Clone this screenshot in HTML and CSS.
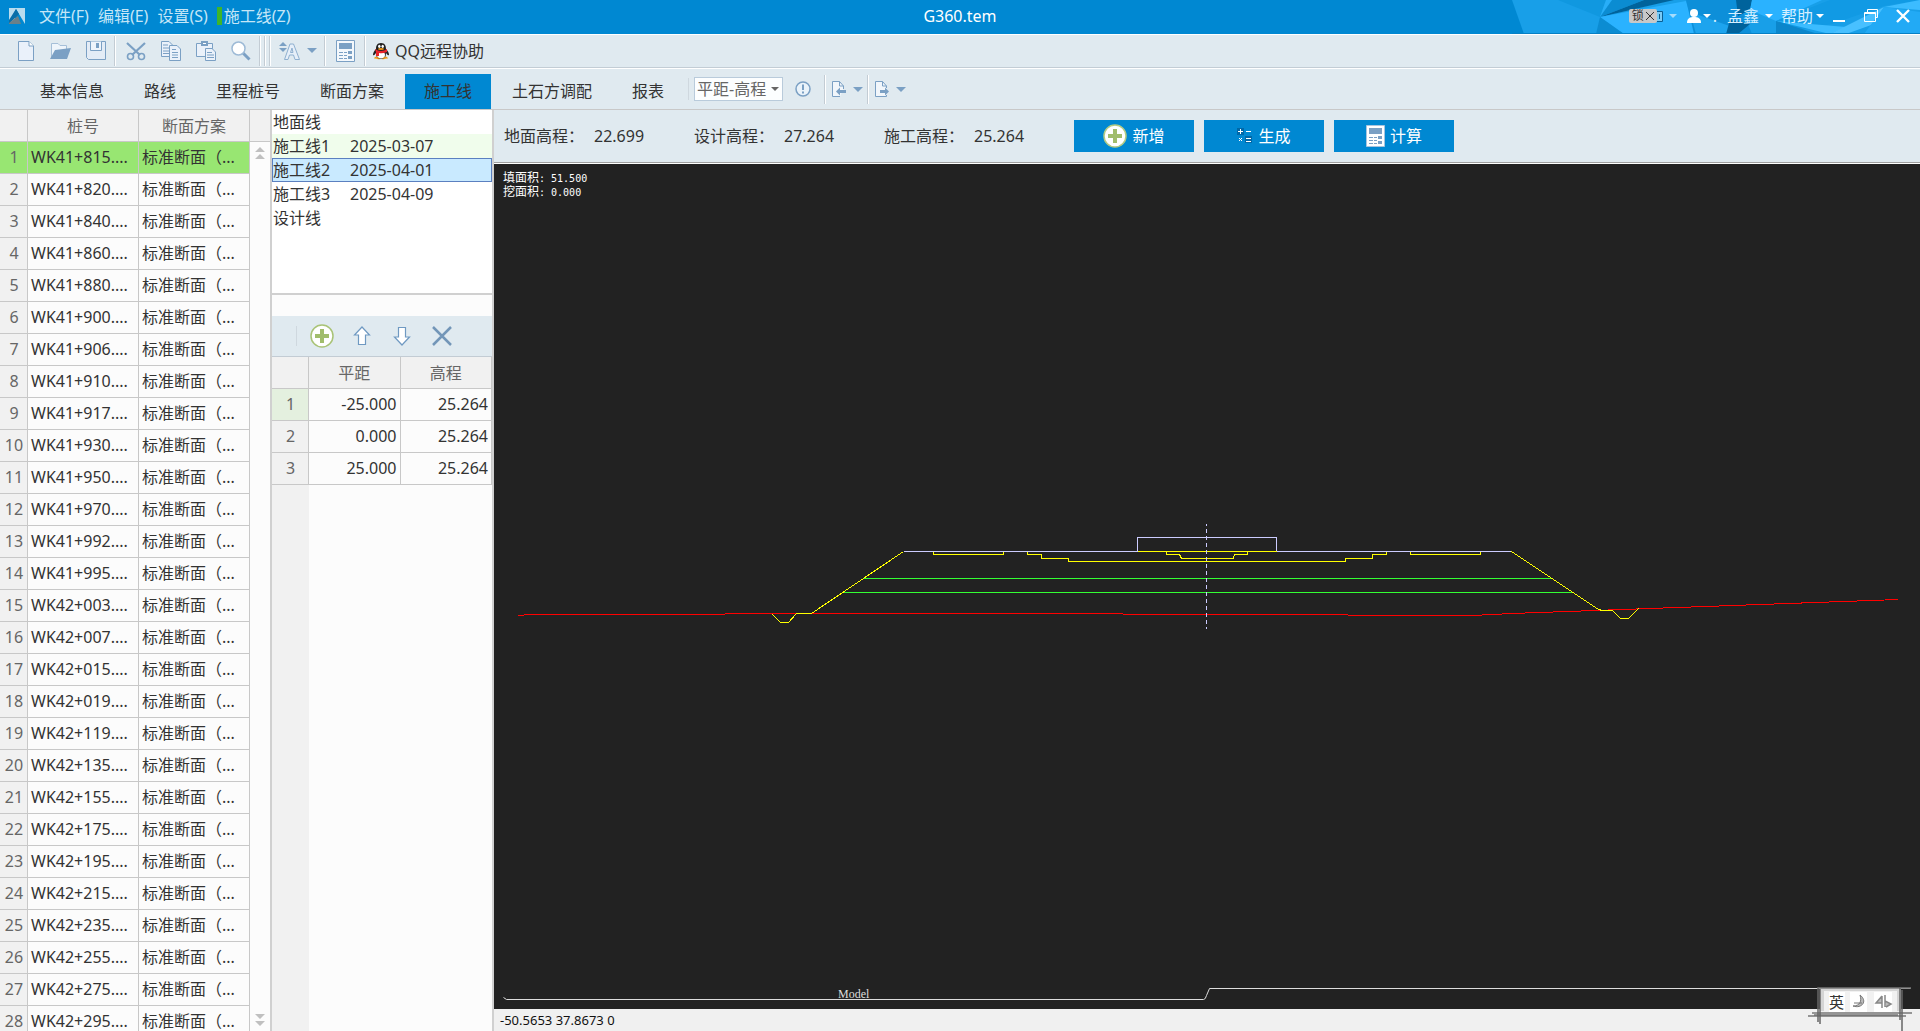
FILE: index.html
```html
<!DOCTYPE html>
<html lang="zh-CN">
<head>
<meta charset="utf-8">
<title>G360.tem</title>
<meta name="viewport" content="width=device-width, initial-scale=1">
<link rel="stylesheet" href="styles.css">
</head>
<body>
<header class="titlebar">
  <svg class="titlebar-art" width="408" height="34" viewBox="0 0 408 34" aria-hidden="true">
    <path d="M0 0H408V34H12Z" fill="#189fe8"/>
    <path d="M88 17L46 0H94Z" fill="#1098e0"/>
    <path d="M94 0H160L88 17Z" fill="#28aef8"/>
    <path d="M88 17L100 0H132Z" fill="#0b8cd2"/>
    <path d="M88 17L132 0H162Z" fill="#00639c"/>
    <path d="M88 17L174 1L184 34H112Z" fill="#2ab2ff"/>
    <path d="M88 17L112 34H84Z" fill="#0b8cd2"/>
    <path d="M174 0H226L240 34H182Z" fill="#0d8fd9"/>
    <path d="M178 12L226 29L214 34H184Z" fill="#1da4ee"/>
    <path d="M224 0H240L238 10L226 16Z" fill="#00639c"/>
    <path d="M214 34L218 20L238 24L226 34Z" fill="#00639c"/>
    <path d="M240 0H310L264 21L238 10Z" fill="#2ab2ff"/>
    <path d="M264 21L318 0H408L372 6L320 24L264 34Z" fill="#119ae4"/>
    <path d="M264 21L334 27L318 34Z" fill="#3cbcff"/>
    <path d="M318 34L372 7L362 24L334 34Z" fill="#48c0ff"/>
    <path d="M264 21L306 34H264Z" fill="#0b86cb"/>
    <path d="M372 7L408 0V10Z" fill="#3cbcff"/>
    <path d="M372 7L408 12V34H352Z" fill="#22aaf5"/>
    <path d="M0 33H408V34H0Z" fill="#0780c4"/>
  </svg>
  <nav class="menus" aria-label="主菜单">
    <svg width="16" height="16" viewBox="0 0 16 16" aria-hidden="true"><path d="M0 0H16V16H0Z" fill="#b9dcee"/><path d="M7 1L16 16H10L4 7Z" fill="#0088cf"/><path d="M7 1L10 6L0 16V12Z" fill="#0a6ea8"/><path d="M0 15L9 8L12 16H0Z" fill="#6b8088"/></svg>
    <button class="menu">文件(F)</button>
    <button class="menu">编辑(E)</button>
    <button class="menu">设置(S)</button>
    <button class="menu menu-marked">施工线(Z)</button>
  </nav>
  <h1 class="doc-title">G360.tem</h1>
  <div class="account">
    <button class="bar-btn lock" aria-label="锁"><span class="lock-face">锁<svg width="8" height="8" viewBox="0 0 8 8"><path d="M0 0L8 8M8 0L0 8" stroke="#333" fill="none"/></svg></span><svg width="6" height="11" viewBox="0 0 6 11"><path d="M0 .5H5.500V10.500H0" stroke="#0a5f94" fill="#7acbf5"/><path d="M2.500 3V8" stroke="#0a5f94"/></svg></button>
    <i class="caret caret-pale"></i>
    <button class="bar-btn user" aria-label="用户"><svg width="14" height="15" viewBox="0 0 14 15"><circle cx="7" cy="4" r="4" fill="#fff"/><path d="M0 14C0 9 3 8 7 8S14 9 14 14Z" fill="#fff"/></svg><i class="caret caret-white"></i>.</button>
    <button class="bar-btn name">孟鑫<i class="caret caret-white"></i></button>
    <button class="bar-btn help">帮助<i class="caret caret-white"></i></button>
    <button class="bar-btn win" aria-label="最小化"><svg width="14" height="14" viewBox="0 0 14 14"><path d="M1 12H13" stroke="#fff" stroke-width="2"/></svg></button>
    <button class="bar-btn win" aria-label="还原"><svg width="14" height="14" viewBox="0 0 14 14"><path d="M3 4V1H13V9H11M0 4H11V13H0ZM0 5H11" stroke="#fff" fill="none" transform="translate(.5 -.5)"/></svg></button>
    <button class="bar-btn win" aria-label="关闭"><svg width="14" height="14" viewBox="0 0 14 14"><path d="M1 1L13 13M13 1L1 13" stroke="#fff" stroke-width="2.4"/></svg></button>
  </div>
</header>

<div class="toolbar" role="toolbar" aria-label="常用工具">
  <button class="tool" aria-label="新建"><svg width="18" height="20" viewBox="0 0 18 20"><path d="M1.500 .5H12L16.500 5V19.500H1.500Z" fill="#eaf1fa" stroke="#7ba0c4"/><path d="M12 .5V5H16.500" fill="#fff" stroke="#7ba0c4"/></svg></button>
  <button class="tool" aria-label="打开"><svg width="21" height="18" viewBox="0 0 21 18"><path d="M1.500 16V1.500H8L10 3.500H16.500V8" fill="#eef5fb" stroke="#a5bfd8"/><path d="M5 8L21 6L17 17H0Z" fill="#7ba0c4"/></svg></button>
  <button class="tool" aria-label="保存"><svg width="20" height="20" viewBox="0 0 20 20"><path d="M.5 .5H19.500V18.500H2.500L.5 16.500Z" fill="#e3ecf6" stroke="#7ba0c4"/><path d="M4.500 .5V9.500H15.500V.5" fill="#eef4fb" stroke="#7ba0c4"/><path d="M10 2H13V7H10Z" fill="#7ba0c4"/></svg></button>
  <i class="sep"></i>
  <button class="tool" aria-label="剪切"><svg width="20" height="20" viewBox="0 0 20 20"><path d="M1 2L14 14M19 2L6 14" stroke="#7ba0c4" stroke-width="2.200"/><circle cx="4.500" cy="15.500" r="3" fill="none" stroke="#7ba0c4" stroke-width="1.600"/><circle cx="15.500" cy="15.500" r="3" fill="none" stroke="#7ba0c4" stroke-width="1.600"/></svg></button>
  <button class="tool" aria-label="复制"><svg width="20" height="20" viewBox="0 0 20 20"><path d="M.5 .5H8L11.500 4V15.500H.5Z" fill="#eaf1fa" stroke="#7ba0c4"/><path d="M2 4H7M2 7H8M2 10H8M2 12.500H8" stroke="#7ba0c4"/><path d="M8.500 4.500H16L19.500 8V19.500H8.500Z" fill="#eaf1fa" stroke="#7ba0c4"/><path d="M11 8.500H15M11 11.500H17M11 14H17M11 16.500H17" stroke="#7ba0c4"/></svg></button>
  <button class="tool" aria-label="粘贴"><svg width="20" height="20" viewBox="0 0 20 20"><path d="M.5 2.500H16.500V15.500H.5Z" fill="#eaf1fa" stroke="#7ba0c4"/><path d="M5 0H12V5H5Z" fill="#7ba0c4"/><path d="M7 2H10V3H7Z" fill="#fff"/><path d="M9.500 7.500H16L19.500 11V19.500H9.500Z" fill="#eaf1fa" stroke="#7ba0c4"/><path d="M11 11.500H16M11 14H18M11 16.500H18" stroke="#7ba0c4"/></svg></button>
  <button class="tool" aria-label="查找"><svg width="20" height="20" viewBox="0 0 20 20"><path d="M12 12L18.500 18.500" stroke="#7ba0c4" stroke-width="3"/><circle cx="7.500" cy="7.500" r="6.500" fill="#fff" stroke="#9dbad6" stroke-width="1.500"/></svg></button>
  <i class="sep"></i><i class="sep"></i><i class="sep"></i>
  <button class="tool tool-drop" aria-label="文字大小"><svg width="22" height="20" viewBox="0 0 22 20"><path d="M4 1L8 5H0ZM0 7H8L4 11Z" fill="#7ba0c4"/><path d="M5.500 18.500H9L10.500 14H14.500L16 18.500H20.500L14.500 3H11Z M11.500 11.500L13 7L14 11.500Z" fill="#e6eff9" stroke="#8fb0d0"/></svg><i class="caret caret-tool"></i></button>
  <i class="sep"></i>
  <button class="tool tool-calc" aria-label="计算器"><svg width="19" height="22" viewBox="0 0 19 22"><path d="M.5 .5H18.500V21.500H.5Z" fill="#f4f8fc" stroke="#7ba0c4"/><path d="M3 3H16V9H3Z" fill="#7ba0c4"/><path d="M3 12.500H7M8 12.500H11M3 15.500H7M8 15.500H11M3 18.500H7M8 18.500H11" stroke="#7ba0c4"/><path d="M12 11H16V14H12ZM12 16H16V19H12Z" fill="#7ba0c4"/></svg></button>
  <i class="sep"></i>
  <button class="tool tool-qq"><svg width="18" height="18" viewBox="0 0 18 18" aria-hidden="true"><path d="M4 16Q1 17 3 15Q9 13 15 15Q17 17 14 16Q13 18 9 17Q5 18 4 16" fill="#f09a18"/><path d="M9 1C5 1 4 4 4 7C2 9 1 11 1 13Q2 14 4 11Q4 17 9 17T14 11Q16 14 17 13C17 11 16 9 14 7C14 4 13 1 9 1Z" fill="#222"/><ellipse cx="9" cy="13" rx="4" ry="3.500" fill="#fff"/><path d="M3 7Q9 11 15 7L15 10Q10 12 7 11V14H4V10Z" fill="#e8232a"/><ellipse cx="7.300" cy="4.300" rx="1.200" ry="1.600" fill="#fff"/><ellipse cx="10.700" cy="4.300" rx="1.200" ry="1.600" fill="#fff"/><ellipse cx="9" cy="7" rx="3" ry="1" fill="#f09a18"/><path d="M2 16.500Q5 14 8 16.500ZM10 16.500Q13 14 16 16.500Z" fill="#f09a18"/></svg>QQ远程协助</button>
</div>

<nav class="tabs" aria-label="模块">
  <button class="tab">基本信息</button>
  <button class="tab">路线</button>
  <button class="tab">里程桩号</button>
  <button class="tab">断面方案</button>
  <button class="tab tab-active">施工线</button>
  <button class="tab">土石方调配</button>
  <button class="tab">报表</button>
  <div class="tab-tools">
    <i class="sep sep-faint"></i>
    <label class="mode"><select aria-label="数据格式"><option>平距-高程</option></select><i class="caret caret-dark"></i></label>
    <button class="tool" aria-label="提示"><svg width="16" height="16" viewBox="0 0 16 16"><circle cx="8" cy="8" r="7" fill="#eaf3fa" stroke="#7ba0c4" stroke-width="1.500"/><path d="M8 3.500V9M8 10.500V12.500" stroke="#7ba0c4" stroke-width="2"/></svg></button>
    <i class="sep"></i>
    <button class="tool tool-io" aria-label="导入"><svg width="16" height="16" viewBox="0 0 16 16"><path d="M12.500 8V5L8.500 .5H1.500V15.500H9M8.500 .5V5H12.500" fill="#f1f6fb" stroke="#7ba0c4"/><path d="M5 10.500L9 6.500V9H15V12H9V14.500Z" fill="#7ba0c4"/></svg><i class="caret caret-tool"></i></button>
    <i class="sep"></i>
    <button class="tool tool-io" aria-label="导出"><svg width="16" height="16" viewBox="0 0 16 16"><path d="M12.500 7V5L8.500 .5H1.500V15.500H12.500V14M8.500 .5V5H12.500" fill="#f1f6fb" stroke="#7ba0c4"/><path d="M15 10.500L11 6.500V9H6V12H11V14.500Z" fill="#7ba0c4"/></svg><i class="caret caret-tool"></i></button>
  </div>
</nav>

<main class="workspace">
  <section class="stations" aria-label="桩号列表">
    <table class="grid station-grid">
      <colgroup><col class="col-no"><col><col></colgroup>
      <thead><tr><th></th><th>桩号</th><th>断面方案</th></tr></thead>
      <tbody>
        <tr class="current"><th>1</th><td>WK41+815....</td><td>标准断面（...</td></tr>
        <tr><th>2</th><td>WK41+820....</td><td>标准断面（...</td></tr>
        <tr><th>3</th><td>WK41+840....</td><td>标准断面（...</td></tr>
        <tr><th>4</th><td>WK41+860....</td><td>标准断面（...</td></tr>
        <tr><th>5</th><td>WK41+880....</td><td>标准断面（...</td></tr>
        <tr><th>6</th><td>WK41+900....</td><td>标准断面（...</td></tr>
        <tr><th>7</th><td>WK41+906....</td><td>标准断面（...</td></tr>
        <tr><th>8</th><td>WK41+910....</td><td>标准断面（...</td></tr>
        <tr><th>9</th><td>WK41+917....</td><td>标准断面（...</td></tr>
        <tr><th>10</th><td>WK41+930....</td><td>标准断面（...</td></tr>
        <tr><th>11</th><td>WK41+950....</td><td>标准断面（...</td></tr>
        <tr><th>12</th><td>WK41+970....</td><td>标准断面（...</td></tr>
        <tr><th>13</th><td>WK41+992....</td><td>标准断面（...</td></tr>
        <tr><th>14</th><td>WK41+995....</td><td>标准断面（...</td></tr>
        <tr><th>15</th><td>WK42+003....</td><td>标准断面（...</td></tr>
        <tr><th>16</th><td>WK42+007....</td><td>标准断面（...</td></tr>
        <tr><th>17</th><td>WK42+015....</td><td>标准断面（...</td></tr>
        <tr><th>18</th><td>WK42+019....</td><td>标准断面（...</td></tr>
        <tr><th>19</th><td>WK42+119....</td><td>标准断面（...</td></tr>
        <tr><th>20</th><td>WK42+135....</td><td>标准断面（...</td></tr>
        <tr><th>21</th><td>WK42+155....</td><td>标准断面（...</td></tr>
        <tr><th>22</th><td>WK42+175....</td><td>标准断面（...</td></tr>
        <tr><th>23</th><td>WK42+195....</td><td>标准断面（...</td></tr>
        <tr><th>24</th><td>WK42+215....</td><td>标准断面（...</td></tr>
        <tr><th>25</th><td>WK42+235....</td><td>标准断面（...</td></tr>
        <tr><th>26</th><td>WK42+255....</td><td>标准断面（...</td></tr>
        <tr><th>27</th><td>WK42+275....</td><td>标准断面（...</td></tr>
        <tr><th>28</th><td>WK42+295....</td><td>标准断面（...</td></tr>
      </tbody>
    </table>
    <div class="scroller">
      <div class="scroller-head"></div>
      <button class="scroll-btn" aria-label="上滚"><svg width="10" height="14" viewBox="0 0 10 14"><path d="M5 0L10 5H0ZM5 7L10 12H0Z" fill="#c0c0c0"/></svg></button>
      <button class="scroll-btn scroll-down" aria-label="下滚"><svg width="10" height="14" viewBox="0 0 10 14"><path d="M0 0H10L5 5ZM0 7H10L5 12Z" fill="#c0c0c0"/></svg></button>
    </div>
  </section>

  <section class="lines" aria-label="施工线">
    <ul class="line-list">
      <li><span>地面线</span></li>
      <li class="alt"><span>施工线1</span><span>2025-03-07</span></li>
      <li class="selected"><span>施工线2</span><span>2025-04-01</span></li>
      <li><span>施工线3</span><span>2025-04-09</span></li>
      <li><span>设计线</span></li>
    </ul>
    <div class="line-tools">
      <i class="sep sep-faint"></i>
      <button class="tool" aria-label="添加"><svg width="24" height="24" viewBox="0 0 24 24"><circle cx="12" cy="12" r="11" fill="#fff" stroke="#a9c377" stroke-width="1.500"/><path d="M10 5H14V10H19V14H14V19H10V14H5V10H10Z" fill="#a1bd6c"/></svg></button>
      <button class="tool" aria-label="上移"><svg width="18" height="20" viewBox="0 0 18 20"><path d="M9 1L16.500 9H12.500V18.500H5.500V9H1.500Z" fill="#fff" stroke="#6f99c2" stroke-width="1.200"/></svg></button>
      <button class="tool" aria-label="下移"><svg width="18" height="20" viewBox="0 0 18 20"><path d="M9 19L16.500 11H12.500V1.500H5.500V11H1.500Z" fill="#fff" stroke="#6f99c2" stroke-width="1.200"/></svg></button>
      <button class="tool" aria-label="删除"><svg width="20" height="20" viewBox="0 0 20 20"><path d="M1 1L19 19M19 1L1 19" stroke="#7396b8" stroke-width="2.500"/></svg></button>
    </div>
    <table class="grid point-grid">
      <colgroup><col class="col-no"><col><col></colgroup>
      <thead><tr><th></th><th>平距</th><th>高程</th></tr></thead>
      <tbody>
        <tr class="current"><th>1</th><td>-25.000</td><td>25.264</td></tr>
        <tr><th>2</th><td>0.000</td><td>25.264</td></tr>
        <tr><th>3</th><td>25.000</td><td>25.264</td></tr>
      </tbody>
    </table>
    <div class="gutter"></div>
  </section>

  <section class="section-view" aria-label="横断面">
    <div class="summary">
      <dl class="levels">
        <dt>地面高程：</dt><dd>22.699</dd>
        <dt>设计高程：</dt><dd>27.264</dd>
        <dt>施工高程：</dt><dd>25.264</dd>
      </dl>
      <button class="action"><svg width="24" height="24" viewBox="0 0 24 24" aria-hidden="true"><circle cx="12" cy="12" r="11" fill="#fff" stroke="#b3cb84" stroke-width="1.500"/><path d="M10 5H14V10H19V14H14V19H10V14H5V10H10Z" fill="#a1bd6c"/></svg>新增</button>
      <button class="action"><svg width="16" height="16" viewBox="0 0 16 16" aria-hidden="true"><path d="M0 0H7V7H0ZM8 8H15V15H8Z" fill="#0068a8"/><path d="M1 3.500H6M3.500 1V6M9 3.500H14M9 10.500H14M9 13.500H14M2 10L5 13M5 10L2 13" stroke="#fff" fill="none"/></svg>生成</button>
      <button class="action"><svg width="19" height="22" viewBox="0 0 19 22" aria-hidden="true"><path d="M.5 .5H18.500V21.500H.5Z" fill="#fff" stroke="#a8c4de"/><path d="M3 3H16V9H3Z" fill="#7ba0c4"/><path d="M3 12.500H7M8 12.500H11M3 15.500H7M8 15.500H11M3 18.500H7M8 18.500H11" stroke="#7ba0c4"/><path d="M12 11H16V14H12ZM12 16H16V19H12Z" fill="#7ba0c4"/></svg>计算</button>
    </div>
    <div class="canvas">
      <p class="areas">填面积<b>: 51.500</b><br>挖面积<b>: 0.000</b></p>
      <svg class="plot" viewBox="494 200 1426 780" role="img" aria-label="断面图">
        <g transform="translate(.5 .5)" fill="none" shape-rendering="crispEdges">
          <path d="M517 615H523L524 614H724L725 613H1122L1123 614H1347L1348 615H1472L1511 613L1898 599" stroke="#f00"/>
          <path d="M862 578H1552M841 592H1572" stroke="#3f3"/>
          <path d="M903 551H1137V537H1276V551H1511" stroke="#ccf"/>
          <path d="M772 614L780 622H788L796 613H811L903 551M933 551V554H1003V551M1027 551V554H1041V558H1068V561H1345V558H1372V554H1386V551M1410 551V554H1480V551M1137 551H1276M1166 551V554H1179L1181 558H1233L1234 554H1247V551M1511 551L1598 609L1602 610H1612L1620 618H1628L1638 608" stroke="#ff0"/>
          <path d="M1206 523V628" stroke="#ccf" stroke-dasharray="4 3" stroke-dashoffset="2"/>
        </g>
      </svg>
      <svg class="sheets" viewBox="494 980 1426 29">
        <path d="M503 997L506 999H1203Q1205 999 1206 995L1209 988H1910" transform="translate(.5 .5)" fill="none" stroke="#ddd"/>
        <text x="838" y="998">Model</text>
      </svg>
    </div>
    <footer class="status">-50.5653 37.8673 0</footer>
  </section>
</main>

<div class="ime">
  <svg width="108" height="48" viewBox="1808 983 108 48" role="img" aria-label="输入法">
    <path d="M1820 989H1901V1011H1820Z" fill="#d4d4d4"/>
    <path d="M1824 991H1897V1012H1824Z" fill="#f1f1f1"/>
    <path d="M1829 992H1845V1012H1829ZM1850 992H1867V1012H1850ZM1874 992H1892V1012H1874Z" fill="#fff"/>
    <path d="M1818 988H1911M1812 1013H1912M1808 1016H1906M1814 1015H1898" stroke="#777" stroke-width="1.300"/>
    <path d="M1818 987V1022M1820 989V1024M1900 987V1020M1902 990V1031" stroke="#666" stroke-width="1.500"/>
    <text x="1829" y="1008">英</text>
    <path d="M1860 995C1868 1001 1862 1009 1853 1006C1860 1006 1862 1001 1860 995M1854 1003H1862" fill="#bbb" stroke="#777"/>
    <path d="M1882 996V1008M1882 996L1876 1003H1882M1885 995V1007M1885 1001L1891 1004L1886 1007" fill="#bbb" stroke="#888" stroke-width="1.500"/>
  </svg>
</div>
</body>
</html>
```
FILE: styles.css
```css
:root {
  --blue: #0088d2;
  --panel: #e0eaf0;
  --rule: #c8c8c8;
  --icon: #7ba0c4;
  --text: #333;
}

* { box-sizing: border-box; }

body {
  margin: 0;
  height: 100vh;
  display: flex;
  flex-direction: column;
  overflow: hidden;
  background: #fcfcfc;
  color: var(--text);
  font: 16px/24px "Noto Sans", "Noto Sans CJK SC", sans-serif;
}

button {
  margin: 0;
  padding: 0;
  border: 0;
  background: none;
  color: inherit;
  font: inherit;
  white-space: nowrap;
}

svg { display: block; flex: none; }

/* Title bar */
.titlebar {
  position: relative;
  flex: none;
  display: grid;
  grid-template-columns: 1fr auto 1fr;
  align-items: center;
  height: 35px;
  padding-bottom: 2px;
  border-bottom: 1px solid #fff;
  background: var(--blue);
}
.titlebar-art { position: absolute; top: 0; right: 0; }
.menus { display: flex; align-items: center; padding-left: 9px; }
.menu { margin-left: 9px; color: #c5e6f7; }
.menus svg + .menu { margin-left: 14px; }
.menu-marked { padding-left: 2px; border-left: 5px solid #3fb52a; line-height: 18px; }
.doc-title { margin: 0; font-size: 16px; font-weight: 400; color: #fff; }
.account {
  position: relative;
  display: flex;
  align-items: center;
  justify-content: flex-end;
  padding-right: 10px;
  color: #d5efff;
}
.bar-btn { display: flex; align-items: center; }
.lock-face {
  display: flex;
  align-items: center;
  gap: 2px;
  height: 14px;
  padding: 0 3px;
  border-radius: 2px;
  background: #c8c8c8;
  color: #333;
  font-size: 12px;
}
.lock { margin-right: 6px; }
.user { margin-left: 10px; gap: 2px; }
.name { margin-left: 10px; gap: 6px; }
.help { margin-left: 8px; gap: 3px; }
.win { margin-left: 18px; }
.help + .win { margin-left: 8px; }

.caret {
  width: 0;
  height: 0;
  border: 4px solid transparent;
  border-bottom: 0;
  border-top-color: currentColor;
}
.caret-pale { color: #a5dcfb; }
.caret-white { color: #fff; }
.caret-dark { color: #666; }
.caret-tool { border-width: 5px 5px 0; color: var(--icon); }

/* Toolbars */
.toolbar {
  flex: none;
  display: flex;
  align-items: center;
  height: 34px;
  padding: 0 0 2px 8px;
  border-bottom: 1px solid #fff;
  box-shadow: inset 0 -1px #c3cdd5;
  background: var(--panel);
}
.tool {
  display: flex;
  align-items: center;
  justify-content: center;
  width: 35px;
  height: 32px;
}
.sep {
  align-self: stretch;
  width: 2px;
  margin: 1px 2px 0 1px;
  border-left: 1px solid #c3ccd4;
  border-right: 1px solid #fff;
}
.sep-faint { border-right-color: transparent; opacity: .6; }
.tool-drop { width: 50px; gap: 6px; }
.tool-qq { width: auto; gap: 5px; padding-left: 4px; }

.tabs {
  flex: none;
  display: flex;
  align-items: flex-end;
  height: 41px;
  padding-left: 20px;
  border-bottom: 1px solid var(--rule);
  background: var(--panel);
}
.tab { height: 35px; margin: 0 1px; padding: 0 19px 2px; }
.tab-active { background: var(--blue); }
.tab-tools { display: flex; align-items: center; height: 40px; padding: 5px 0; }
.tab-tools .sep-faint { margin: 4px; }
.mode { position: relative; }
.mode select {
  display: block;
  width: 89px;
  height: 24px;
  padding: 0 2px;
  appearance: none;
  border: 1px solid #b9cbdb;
  border-radius: 0;
  background: #fcfeff;
  color: #666;
  font: inherit;
  line-height: 22px;
}
.mode .caret { position: absolute; right: 4px; top: 10px; }
.mode + .tool { width: 40px; }
.tool-io { width: 38px; gap: 6px; }

/* Work area */
.workspace {
  flex: 1;
  min-height: 0;
  display: grid;
  grid-template-columns: 272px 222px minmax(0, 1fr);
  grid-template-rows: minmax(0, 1fr);
}

.grid {
  border-collapse: separate;
  border-spacing: 0;
  table-layout: fixed;
}
.grid th, .grid td {
  height: 32px;
  padding: 0 3px 2px;
  border-right: 1px solid var(--rule);
  border-bottom: 1px solid var(--rule);
  font-weight: 400;
  overflow: hidden;
  white-space: nowrap;
}
.grid th { background: #f1f1f1; color: #666; padding: 0 0 2px 1px; }
.grid thead th { padding: 0; }
.grid td { background: #fcfcfc; }

.stations {
  display: flex;
  overflow: hidden;
  border-right: 2px solid #d0d0d0;
}
.station-grid { width: 250px; align-self: flex-start; flex: none; }
.station-grid .col-no { width: 28px; }
.station-grid .current > * { background: #98e672; }
.scroller { flex: 1; display: flex; flex-direction: column; align-items: center; }
.scroller-head {
  align-self: stretch;
  height: 32px;
  margin-bottom: 5px;
  border-bottom: 1px solid var(--rule);
  background: #f1f1f1;
}
.scroll-down { margin-top: auto; padding-bottom: 3px; }

.lines {
  display: flex;
  flex-direction: column;
  border-right: 2px solid #d0d0d0;
}
.line-list {
  height: 185px;
  margin: 0 0 21px;
  padding: 0;
  list-style: none;
  background: #fff;
  border-bottom: 2px solid #d0d0d0;
}
.line-list li { display: grid; grid-template-columns: 77px 1fr; height: 24px; padding: 0 1px; }
.line-list .alt { background: #f0fdec; }
.line-list .selected { padding: 0; border: 1px solid #5b80c0; background: #c9eaff; line-height: 22px; }
.line-tools {
  display: flex;
  align-items: center;
  height: 41px;
  padding-left: 23px;
  border-bottom: 1px solid #c3ccd4;
  background: var(--panel);
}
.line-tools .sep { margin: 10px 4px 10px 1px; }
.line-tools .tool { width: 40px; }
.point-grid { width: 220px; }
.point-grid .col-no { width: 37px; }
.point-grid td { text-align: right; }
.point-grid .current th { background: #e4f0df; }
.gutter { flex: 1; width: 37px; background: #f1f1f1; }

/* Cross-section view */
.section-view { display: flex; flex-direction: column; min-width: 0; }
.summary {
  flex: none;
  display: flex;
  align-items: center;
  gap: 10px;
  height: 54px;
  padding: 0 0 2px 10px;
  border-bottom: 1px solid #fff;
  box-shadow: inset 0 -1px #a0a0a0;
  background: var(--panel);
}
.levels { display: grid; grid-template-columns: repeat(3, 90px 100px); margin: 0 -10px 0 0; }
.levels dd { margin: 0; }
.action {
  display: flex;
  align-items: center;
  justify-content: center;
  gap: 5px;
  width: 120px;
  height: 32px;
  background: var(--blue);
  color: #fff;
}
.canvas {
  flex: 1;
  min-height: 0;
  display: flex;
  flex-direction: column;
  background: #222;
}
.areas {
  height: 36px;
  margin: 0;
  padding: 6px 9px 0;
  color: #fff;
  font: 12px/14px "Noto Sans CJK SC", sans-serif;
}
.areas b { font: 10px/1px "DejaVu Sans Mono", monospace; white-space: pre; }
.plot { flex: 1; min-height: 0; width: 100%; }
.sheets { width: 100%; }
.sheets text { fill: #ddd; font: 12px "Liberation Serif", serif; }
.status {
  flex: none;
  height: 22px;
  padding-left: 6px;
  background: #f0f0f0;
  color: #111;
  font-size: 13px;
  line-height: 22px;
}

/* Input-method badge floating over the corner */
.ime { position: absolute; right: 4px; bottom: 0; }
.ime text { fill: #333; font: 15px "Noto Sans CJK SC", sans-serif; }
```
